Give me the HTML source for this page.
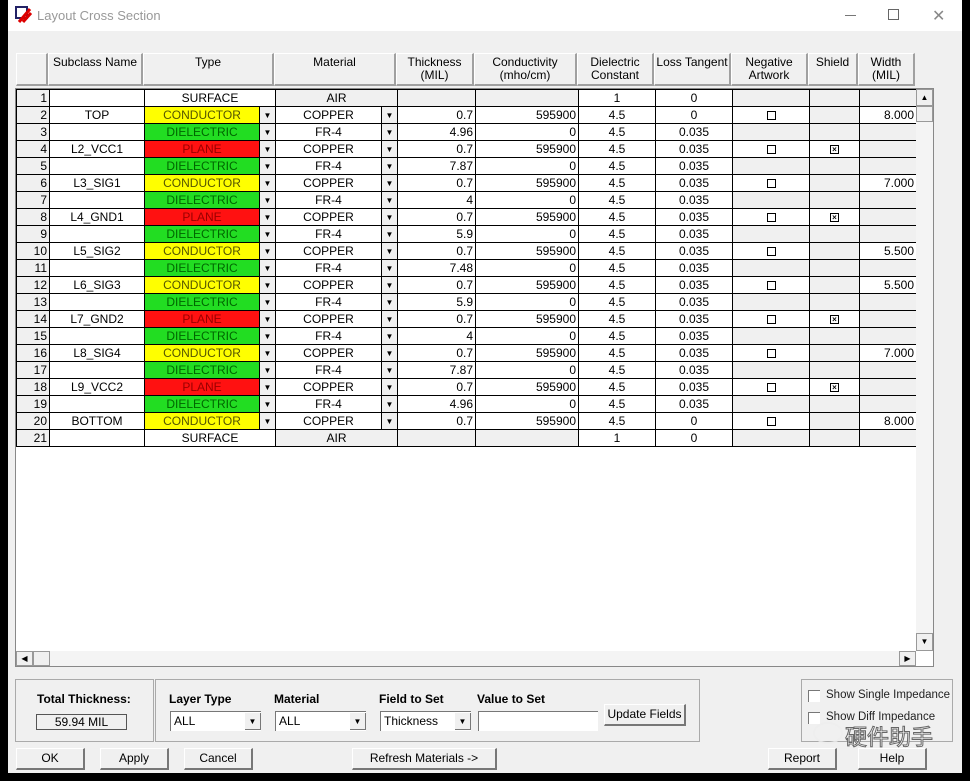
<!DOCTYPE html>
<html><head><meta charset="utf-8"><style>
*{box-sizing:border-box;margin:0;padding:0}
body{width:970px;height:781px;background:#000;position:relative;overflow:hidden;font-family:"Liberation Sans",Arial,sans-serif;font-size:12px;color:#000}
.win{position:absolute;left:8px;top:0;width:954px;height:773px;background:#f0f0f0}
.title{position:absolute;left:0;top:0;width:954px;height:31px;background:#fff}
.title .t{position:absolute;left:29px;top:8px;font-size:13px;color:#999}
.ab{position:absolute;border:1px solid #666}
.hdr{position:absolute;top:53px;height:33px;background:#f0f0f0;border-top:1px solid #fff;border-left:1px solid #fff;border-right:2px solid #a0a0a0;border-bottom:2px solid #a0a0a0;text-align:center;line-height:13px;padding-top:2px}
.grid{position:absolute;left:7px;top:88px;width:919px;height:579px;background:#fff;border:1px solid #888}
table{position:absolute;left:0;top:0;border-collapse:collapse;table-layout:fixed}
td{height:17px;border:1px solid #000;text-align:center;padding:0 2px;white-space:nowrap;overflow:hidden;line-height:15px}
.g{background:#f0f0f0}.r{text-align:right}
.y{background:#ffff00;color:#555500}.gr{background:#22dd22;color:#006600}.rd{background:#ff1111;color:#990000}
.ar{background:#f0f0f0;font-size:8px;padding:0}
.cb{display:inline-block;width:9px;height:9px;border:1px solid #000;vertical-align:middle}
.cx{display:inline-block;width:9px;height:9px;border:1px solid #000;vertical-align:middle;font-size:8px;line-height:7px;font-weight:bold}
.btn{position:absolute;height:22px;background:#f0f0f0;border-top:1px solid #fff;border-left:1px solid #fff;border-right:2px solid #777;border-bottom:2px solid #777;text-align:center;line-height:19px;white-space:nowrap}
.grp{position:absolute;border:1px solid #aaa}
.lbl{position:absolute;font-weight:bold;font-size:12px}
.combo{position:absolute;height:20px;background:#fff;border-top:1px solid #777;border-left:1px solid #777;padding-left:3px;line-height:18px}
.combo i{position:absolute;right:0;top:1px;width:16px;height:17px;background:#f0f0f0;font-style:normal;font-size:8px;text-align:center;line-height:17px;border-right:1px solid #777;border-bottom:1px solid #777}
.sb{position:absolute;background:#f0f0f0;border:1px solid #999;font-size:8px;text-align:center}
</style></head><body>
<div class="win">
<div class="title">
<svg style="position:absolute;left:7px;top:6px" width="17" height="17"><rect x="1" y="1" width="11" height="11" fill="#fff" stroke="#226" stroke-width="2"/><path d="M4 16 L15 3 M8 16 L16 7" stroke="#d00" stroke-width="3"/></svg>
<div class="t">Layout Cross Section</div>
<div style="position:absolute;left:837px;top:15px;width:11px;height:1px;background:#777"></div>
<div class="ab" style="left:880px;top:9px;width:11px;height:11px"></div>
<div style="position:absolute;left:924px;top:6px;font-size:16px;color:#888">✕</div>
</div>
<div class="hdr" style="left:8px;width:32px"></div>
<div class="hdr" style="left:40px;width:95px">Subclass Name</div>
<div class="hdr" style="left:135px;width:131px">Type</div>
<div class="hdr" style="left:266px;width:122px">Material</div>
<div class="hdr" style="left:388px;width:78px">Thickness<br>(MIL)</div>
<div class="hdr" style="left:466px;width:103px">Conductivity<br>(mho/cm)</div>
<div class="hdr" style="left:569px;width:77px">Dielectric<br>Constant</div>
<div class="hdr" style="left:646px;width:77px">Loss Tangent</div>
<div class="hdr" style="left:723px;width:77px">Negative<br>Artwork</div>
<div class="hdr" style="left:800px;width:50px">Shield</div>
<div class="hdr" style="left:850px;width:57px">Width<br>(MIL)</div>
<div class="grid">
<table>
<colgroup><col style="width:33px"><col style="width:95px"><col style="width:115px"><col style="width:16px"><col style="width:106px"><col style="width:16px"><col style="width:78px"><col style="width:103px"><col style="width:77px"><col style="width:77px"><col style="width:77px"><col style="width:50px"><col style="width:57px"></colgroup>
<tr><td class="g r">1</td><td></td><td colspan="2">SURFACE</td><td colspan="2" class="g">AIR</td><td class="g"></td><td class="g"></td><td>1</td><td>0</td><td class="g"></td><td class="g"></td><td class="g"></td></tr>
<tr><td class="g r">2</td><td>TOP</td><td class="y">CONDUCTOR</td><td class="ar">▼</td><td>COPPER</td><td class="ar">▼</td><td class="r">0.7</td><td class="r">595900</td><td>4.5</td><td>0</td><td><span class="cb"></span></td><td class="g"></td><td class="r">8.000</td></tr>
<tr><td class="g r">3</td><td></td><td class="gr">DIELECTRIC</td><td class="ar">▼</td><td>FR-4</td><td class="ar">▼</td><td class="r">4.96</td><td class="r">0</td><td>4.5</td><td>0.035</td><td class="g"></td><td class="g"></td><td class="g"></td></tr>
<tr><td class="g r">4</td><td>L2_VCC1</td><td class="rd">PLANE</td><td class="ar">▼</td><td>COPPER</td><td class="ar">▼</td><td class="r">0.7</td><td class="r">595900</td><td>4.5</td><td>0.035</td><td><span class="cb"></span></td><td><span class="cx">×</span></td><td class="g"></td></tr>
<tr><td class="g r">5</td><td></td><td class="gr">DIELECTRIC</td><td class="ar">▼</td><td>FR-4</td><td class="ar">▼</td><td class="r">7.87</td><td class="r">0</td><td>4.5</td><td>0.035</td><td class="g"></td><td class="g"></td><td class="g"></td></tr>
<tr><td class="g r">6</td><td>L3_SIG1</td><td class="y">CONDUCTOR</td><td class="ar">▼</td><td>COPPER</td><td class="ar">▼</td><td class="r">0.7</td><td class="r">595900</td><td>4.5</td><td>0.035</td><td><span class="cb"></span></td><td class="g"></td><td class="r">7.000</td></tr>
<tr><td class="g r">7</td><td></td><td class="gr">DIELECTRIC</td><td class="ar">▼</td><td>FR-4</td><td class="ar">▼</td><td class="r">4</td><td class="r">0</td><td>4.5</td><td>0.035</td><td class="g"></td><td class="g"></td><td class="g"></td></tr>
<tr><td class="g r">8</td><td>L4_GND1</td><td class="rd">PLANE</td><td class="ar">▼</td><td>COPPER</td><td class="ar">▼</td><td class="r">0.7</td><td class="r">595900</td><td>4.5</td><td>0.035</td><td><span class="cb"></span></td><td><span class="cx">×</span></td><td class="g"></td></tr>
<tr><td class="g r">9</td><td></td><td class="gr">DIELECTRIC</td><td class="ar">▼</td><td>FR-4</td><td class="ar">▼</td><td class="r">5.9</td><td class="r">0</td><td>4.5</td><td>0.035</td><td class="g"></td><td class="g"></td><td class="g"></td></tr>
<tr><td class="g r">10</td><td>L5_SIG2</td><td class="y">CONDUCTOR</td><td class="ar">▼</td><td>COPPER</td><td class="ar">▼</td><td class="r">0.7</td><td class="r">595900</td><td>4.5</td><td>0.035</td><td><span class="cb"></span></td><td class="g"></td><td class="r">5.500</td></tr>
<tr><td class="g r">11</td><td></td><td class="gr">DIELECTRIC</td><td class="ar">▼</td><td>FR-4</td><td class="ar">▼</td><td class="r">7.48</td><td class="r">0</td><td>4.5</td><td>0.035</td><td class="g"></td><td class="g"></td><td class="g"></td></tr>
<tr><td class="g r">12</td><td>L6_SIG3</td><td class="y">CONDUCTOR</td><td class="ar">▼</td><td>COPPER</td><td class="ar">▼</td><td class="r">0.7</td><td class="r">595900</td><td>4.5</td><td>0.035</td><td><span class="cb"></span></td><td class="g"></td><td class="r">5.500</td></tr>
<tr><td class="g r">13</td><td></td><td class="gr">DIELECTRIC</td><td class="ar">▼</td><td>FR-4</td><td class="ar">▼</td><td class="r">5.9</td><td class="r">0</td><td>4.5</td><td>0.035</td><td class="g"></td><td class="g"></td><td class="g"></td></tr>
<tr><td class="g r">14</td><td>L7_GND2</td><td class="rd">PLANE</td><td class="ar">▼</td><td>COPPER</td><td class="ar">▼</td><td class="r">0.7</td><td class="r">595900</td><td>4.5</td><td>0.035</td><td><span class="cb"></span></td><td><span class="cx">×</span></td><td class="g"></td></tr>
<tr><td class="g r">15</td><td></td><td class="gr">DIELECTRIC</td><td class="ar">▼</td><td>FR-4</td><td class="ar">▼</td><td class="r">4</td><td class="r">0</td><td>4.5</td><td>0.035</td><td class="g"></td><td class="g"></td><td class="g"></td></tr>
<tr><td class="g r">16</td><td>L8_SIG4</td><td class="y">CONDUCTOR</td><td class="ar">▼</td><td>COPPER</td><td class="ar">▼</td><td class="r">0.7</td><td class="r">595900</td><td>4.5</td><td>0.035</td><td><span class="cb"></span></td><td class="g"></td><td class="r">7.000</td></tr>
<tr><td class="g r">17</td><td></td><td class="gr">DIELECTRIC</td><td class="ar">▼</td><td>FR-4</td><td class="ar">▼</td><td class="r">7.87</td><td class="r">0</td><td>4.5</td><td>0.035</td><td class="g"></td><td class="g"></td><td class="g"></td></tr>
<tr><td class="g r">18</td><td>L9_VCC2</td><td class="rd">PLANE</td><td class="ar">▼</td><td>COPPER</td><td class="ar">▼</td><td class="r">0.7</td><td class="r">595900</td><td>4.5</td><td>0.035</td><td><span class="cb"></span></td><td><span class="cx">×</span></td><td class="g"></td></tr>
<tr><td class="g r">19</td><td></td><td class="gr">DIELECTRIC</td><td class="ar">▼</td><td>FR-4</td><td class="ar">▼</td><td class="r">4.96</td><td class="r">0</td><td>4.5</td><td>0.035</td><td class="g"></td><td class="g"></td><td class="g"></td></tr>
<tr><td class="g r">20</td><td>BOTTOM</td><td class="y">CONDUCTOR</td><td class="ar">▼</td><td>COPPER</td><td class="ar">▼</td><td class="r">0.7</td><td class="r">595900</td><td>4.5</td><td>0</td><td><span class="cb"></span></td><td class="g"></td><td class="r">8.000</td></tr>
<tr><td class="g r">21</td><td></td><td colspan="2">SURFACE</td><td colspan="2" class="g">AIR</td><td class="g"></td><td class="g"></td><td>1</td><td>0</td><td class="g"></td><td class="g"></td><td class="g"></td></tr>
</table>
<div class="sb" style="left:900px;top:0;width:17px;height:17px;line-height:15px">▲</div>
<div class="sb" style="left:900px;top:17px;width:17px;height:16px"></div>
<div style="position:absolute;left:900px;top:33px;width:17px;height:529px;background:#f4f4f4"></div>
<div class="sb" style="left:900px;top:544px;width:17px;height:18px;line-height:16px">▼</div>
<div style="position:absolute;left:0;top:562px;width:900px;height:15px;background:#f4f4f4"></div>
<div class="sb" style="left:0;top:562px;width:17px;height:15px;line-height:13px">◀</div>
<div class="sb" style="left:17px;top:562px;width:17px;height:15px"></div>
<div class="sb" style="left:883px;top:562px;width:17px;height:15px;line-height:13px">▶</div>
</div>
<div class="grp" style="left:7px;top:679px;width:139px;height:63px"></div>
<div class="lbl" style="left:29px;top:692px">Total Thickness:</div>
<div style="position:absolute;left:28px;top:714px;width:91px;height:16px;border:1px solid #555;text-align:center;line-height:14px">59.94 MIL</div>
<div class="grp" style="left:147px;top:679px;width:545px;height:63px"></div>
<div class="lbl" style="left:161px;top:692px">Layer Type</div>
<div class="lbl" style="left:266px;top:692px">Material</div>
<div class="lbl" style="left:371px;top:692px">Field to Set</div>
<div class="lbl" style="left:469px;top:692px">Value to Set</div>
<div class="combo" style="left:162px;top:711px;width:91px">ALL<i>▼</i></div>
<div class="combo" style="left:267px;top:711px;width:91px">ALL<i>▼</i></div>
<div class="combo" style="left:372px;top:711px;width:91px">Thickness<i>▼</i></div>
<div class="combo" style="left:470px;top:711px;width:120px"></div>
<div class="btn" style="left:596px;top:704px;width:82px">Update Fields</div>
<div class="grp" style="left:793px;top:679px;width:152px;height:63px"></div>
<div style="position:absolute;left:800px;top:690px;width:12px;height:12px;border-top:1px solid #777;border-left:1px solid #777;background:#fff"></div>
<div style="position:absolute;left:818px;top:689px;color:#222;font-size:11.5px;white-space:nowrap">Show Single Impedance</div>
<div style="position:absolute;left:800px;top:712px;width:12px;height:12px;border-top:1px solid #777;border-left:1px solid #777;background:#fff"></div>
<div style="position:absolute;left:818px;top:711px;color:#222;font-size:11.5px;white-space:nowrap">Show Diff Impedance</div>
<div class="btn" style="left:8px;top:748px;width:69px">OK</div>
<div class="btn" style="left:92px;top:748px;width:69px">Apply</div>
<div class="btn" style="left:176px;top:748px;width:69px">Cancel</div>
<div class="btn" style="left:344px;top:748px;width:145px">Refresh Materials -&gt;</div>
<div class="btn" style="left:760px;top:748px;width:69px">Report</div>
<div class="btn" style="left:850px;top:748px;width:69px">Help</div>
<div style="position:absolute;left:805px;top:722px;width:30px;height:22px;border:2px solid #eee;border-radius:50%;opacity:.8"></div>
<div style="position:absolute;left:837px;top:720px;font-family:'Noto Sans CJK SC',sans-serif;font-size:22px;color:#fff;-webkit-text-stroke:1px #666">硬件助手</div>
</div>
</body></html>
